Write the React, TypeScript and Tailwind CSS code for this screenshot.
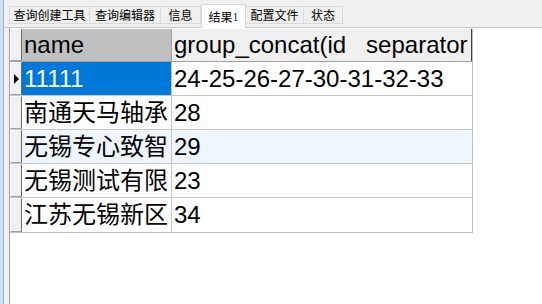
import { ReactNode } from 'react';

const TABS = [
  { label: '查询创建工具', w: 81 },
  { label: '查询编辑器', w: 72 },
  { label: '信息', w: 41 },
  { label: '结果1', w: 45, active: true },
  { label: '配置文件', w: 59 },
  { label: '状态', w: 40 },
];

const ROWS = [
  { name: '11111', ids: '24-25-26-27-30-31-32-33', selected: true },
  { name: '南通天马轴承', ids: '28' },
  { name: '无锡专心致智', ids: '29', alt: true },
  { name: '无锡测试有限', ids: '23' },
  { name: '江苏无锡新区', ids: '34' },
];

const cellFont = "font-['Liberation_Sans','Noto_Sans_CJK_SC',sans-serif] text-[24px] leading-none";

function Indicator({ children }: { children?: ReactNode }) {
  return (
    <div className="w-[12px] shrink-0 flex items-center justify-center bg-[#f0f0f0] border-t border-l border-t-white border-l-white border-r border-b border-r-[#696969] border-b-[#a0a0a0]">
      {children}
    </div>
  );
}

export default function App() {
  return (
    <div className="w-[542px] h-[304px] flex bg-white overflow-hidden">
      <div className="w-[3px] bg-[#cde0f3]" />
      <div className="w-px bg-[#9fb3c8]" />
      <div className="flex-1 flex flex-col">
        {/* tab strip */}
        <div className="h-[28px] bg-[#f0f0f0] border-b border-[#c8c8c8] flex items-end pl-[5px] font-['Noto_Sans_CJK_SC',sans-serif] text-[12px] text-black">
          {TABS.map((t) =>
            t.active ? (
              <div
                key={t.label}
                className="h-[24px] -mb-px bg-white border border-b-0 border-[#d9d9d9] flex items-center justify-center"
                style={{ width: t.w }}
              >
                结果<span className="font-['Liberation_Serif',serif] text-[#1a237e]">1</span>
              </div>
            ) : (
              <div
                key={t.label}
                className="h-[18px] mb-[3px] bg-[#f0f0f0] border border-[#d9d9d9] -ml-px first:ml-0 flex items-center justify-center leading-none"
                style={{ width: t.w }}
              >
                {t.label}
              </div>
            ),
          )}
        </div>

        <div className="flex-1 flex">
          <div className="w-[5px] bg-[#f0f0f0]" />
          <div className="flex-1 border-l border-[#a0a0a0] pt-[1px]">
            <div className="w-[463px] border-r border-b border-[#bfbfbf]">
              {/* header */}
              <div className="flex h-[33px] border-b border-[#a0a0a0]">
                <Indicator />
                <div className={`w-[150px] bg-[#c0c0c0] border-r border-[#a0a0a0] flex items-center pl-[2px] text-black ${cellFont}`}>
                  name
                </div>
                <div className={`flex-1 bg-[#f0f0f0] border-r border-[#404040] flex items-center pl-[2px] text-black overflow-hidden whitespace-pre ${cellFont}`}>
                  group_concat(id   separator
                </div>
              </div>
              {ROWS.map((r) => (
                <div key={r.name} className="flex h-[34px] border-b border-[#c6c6c6] last:border-b-0">
                  <Indicator>
                    {r.selected && <span className="block w-0 h-0 border-y-[5px] border-y-transparent border-l-[5px] border-l-black" />}
                  </Indicator>
                  <div
                    className={`w-[150px] border-r border-[#c6c6c6] flex items-center pl-[2px] whitespace-nowrap overflow-hidden ${cellFont} ${
                      r.selected ? 'bg-[#0078d7] text-white' : r.alt ? 'bg-[#eef5fd] text-black' : 'text-black'
                    }`}
                  >
                    {r.name}
                  </div>
                  <div className={`flex-1 flex items-center pl-[2px] text-black ${cellFont} ${r.alt ? 'bg-[#eef5fd]' : ''}`}>
                    {r.ids}
                  </div>
                </div>
              ))}
            </div>
          </div>
        </div>
      </div>
    </div>
  );
}
